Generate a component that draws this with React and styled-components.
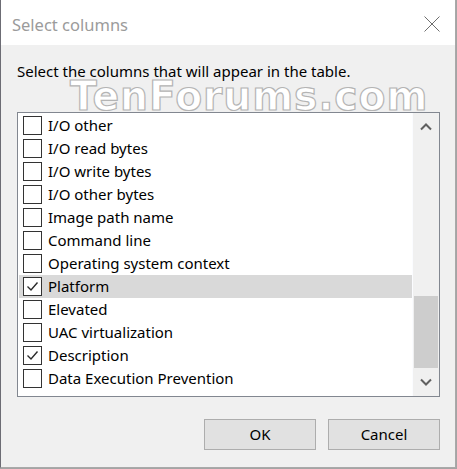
import React from "react";
import styled, { createGlobalStyle } from "styled-components";

const Global = createGlobalStyle`
  html, body { margin: 0; padding: 0; }
  body { background: #a4a4a4; font-family: "Noto Sans", "Open Sans", sans-serif; }
  * { box-sizing: border-box; }
`;

const Window = styled.div`
  position: relative;
  width: 456px;
  height: 468px;
  border-left: 1px solid #6c6c74;
  border-right: 1px solid #a9a9a9;
  border-bottom: 1px solid #a9a9a9;
  background: #f0f0f0;
  display: flex;
  flex-direction: column;
`;

const TitleBar = styled.div`
  height: 45px;
  background: #ffffff;
  display: flex;
  align-items: center;
  justify-content: space-between;
  padding: 3px 0 0 11px;
`;

const Title = styled.div`
  font-size: 16.5px;
  color: #9b9b9b;
`;

const CloseButton = styled.div`
  width: 46px;
  height: 42px;
  display: flex;
  align-items: center;
  justify-content: center;
`;

const Body = styled.div`
  flex: 1;
  display: flex;
  flex-direction: column;
  padding: 0 16px;
`;

const Prompt = styled.div`
  margin-top: 16px;
  height: 20px;
  font-size: 15px;
  color: #000;
  line-height: 20px;
`;

const Watermark = styled.div`
  position: absolute;
  left: 69px;
  top: 82px;
  font-family: "DejaVu Sans", sans-serif;
  font-weight: bold;
  font-size: 40px;
  line-height: 29px;
  color: #ffffff;
  -webkit-text-stroke: 1.2px #b4b4b4;
  letter-spacing: 1px;
  transform: scaleX(0.98);
  transform-origin: left top;
  pointer-events: none;
`;

const ListBox = styled.div`
  margin-top: 31px;
  width: 423px;
  height: 285px;
  border: 1px solid #828790;
  background: #ffffff;
  display: flex;
`;

const List = styled.div`
  flex: 1;
  padding: 1px 0 0 1px;
  overflow: hidden;
`;

const Row = styled.div`
  height: 23px;
  display: flex;
  align-items: center;
  padding-left: 4px;
  background: ${(p) => (p.$selected ? "#d9d9d9" : "transparent")};
  font-size: 15px;
  color: #000;
`;

const Box = styled.div`
  width: 19px;
  height: 19px;
  border: 1px solid #333333;
  background: #ffffff;
  display: flex;
  align-items: center;
  justify-content: center;
  margin-right: 6px;
  margin-top: -1px;
  flex: none;
`;

const Label = styled.span`
  white-space: nowrap;
  line-height: 21px;
`;

const ScrollBar = styled.div`
  width: 27px;
  border-left: 1px solid #fbfcff;
  background: #f0f0f0;
  display: flex;
  flex-direction: column;
`;

const ArrowButton = styled.div`
  height: 28px;
  display: flex;
  align-items: center;
  justify-content: center;
`;

const Track = styled.div`
  flex: 1;
  display: flex;
  flex-direction: column;
  justify-content: flex-end;
  padding: 0 1px;
`;

const Thumb = styled.div`
  height: 72px;
  background: #cdcdcd;
`;

const Buttons = styled.div`
  margin-top: 22px;
  display: flex;
  justify-content: flex-end;
  gap: 12px;
  width: 423px;
`;

const Button = styled.div`
  width: 112px;
  height: 31px;
  border: 1px solid #adadad;
  background: #e1e1e1;
  display: flex;
  align-items: center;
  justify-content: center;
  font-size: 15px;
  color: #000;
  padding-bottom: 1px;
`;

const Check = () => (
  <svg width="15" height="15" viewBox="0 0 15 15">
    <path d="M2.5 7.5 L6 11 L12.5 3.5" fill="none" stroke="#2a2a2a" strokeWidth="1.4" />
  </svg>
);

const items = [
  ["I/O other", false],
  ["I/O read bytes", false],
  ["I/O write bytes", false],
  ["I/O other bytes", false],
  ["Image path name", false],
  ["Command line", false],
  ["Operating system context", false],
  ["Platform", true, true],
  ["Elevated", false],
  ["UAC virtualization", false],
  ["Description", true],
  ["Data Execution Prevention", false],
];

export default function App() {
  return (
    <>
      <Global />
      <Window>
        <TitleBar>
          <Title>Select columns</Title>
          <CloseButton>
            <svg width="16" height="16" viewBox="0 0 16 16">
              <path d="M0.5 0.5 L15.5 15.5 M15.5 0.5 L0.5 15.5" stroke="#6e6e6e" strokeWidth="1" fill="none" />
            </svg>
          </CloseButton>
        </TitleBar>
        <Body>
          <Prompt>Select the columns that will appear in the table.</Prompt>
          <ListBox>
            <List>
              {items.map(([name, checked, selected]) => (
                <Row key={name} $selected={selected}>
                  <Box>{checked && <Check />}</Box>
                  <Label>{name}</Label>
                </Row>
              ))}
            </List>
            <ScrollBar>
              <ArrowButton>
                <svg width="12" height="8" viewBox="0 0 12 8">
                  <path d="M1 6.5 L6 1.5 L11 6.5" fill="none" stroke="#606060" strokeWidth="2" />
                </svg>
              </ArrowButton>
              <Track>
                <Thumb />
              </Track>
              <ArrowButton>
                <svg width="12" height="8" viewBox="0 0 12 8">
                  <path d="M1 1.5 L6 6.5 L11 1.5" fill="none" stroke="#606060" strokeWidth="2" />
                </svg>
              </ArrowButton>
            </ScrollBar>
          </ListBox>
          <Buttons>
            <Button>OK</Button>
            <Button>Cancel</Button>
          </Buttons>
        </Body>
        <Watermark>TenForums.com</Watermark>
      </Window>
    </>
  );
}
